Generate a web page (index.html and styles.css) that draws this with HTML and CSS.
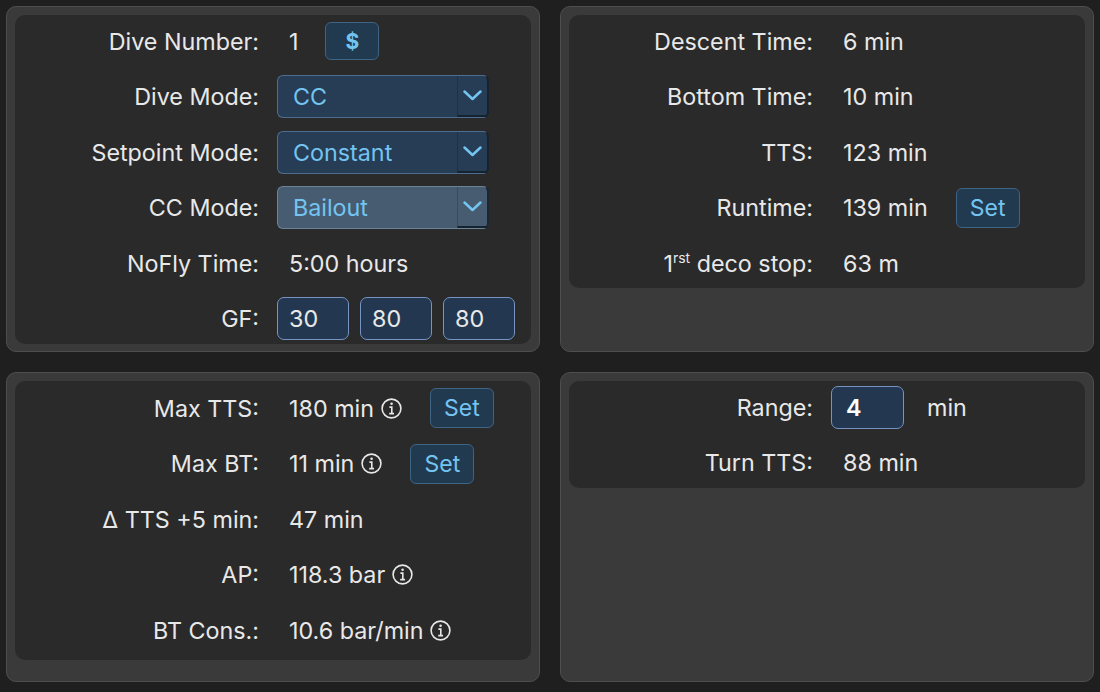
FILE: index.html
```html
<!DOCTYPE html>
<html lang="en">
<head>
    <meta charset="UTF-8">
    <title>Dive Planner</title>
    <link rel="stylesheet" href="styles.css">
</head>
<body>
    <div class="grid">
        <!-- dive settings -->
        <div class="panel">
            <div class="box">
                <div class="row">
                    <span class="label">Dive Number:</span>
                    <div class="value">
                        <span class="text">1</span>
                        <button class="btn btn-dollar">$</button>
                    </div>
                </div>
                <div class="row">
                    <span class="label">Dive Mode:</span>
                    <div class="value">
                        <div class="select"><span class="select-text">CC</span><span class="select-arrow"><svg width="19" height="11" viewBox="0 0 19 11"><path d="M1.5 1.5L9.5 9L17.5 1.5" fill="none" stroke="#74c4f0" stroke-width="2.5" stroke-linecap="round" stroke-linejoin="round"/></svg></span></div>
                    </div>
                </div>
                <div class="row">
                    <span class="label">Setpoint Mode:</span>
                    <div class="value">
                        <div class="select"><span class="select-text">Constant</span><span class="select-arrow"><svg width="19" height="11" viewBox="0 0 19 11"><path d="M1.5 1.5L9.5 9L17.5 1.5" fill="none" stroke="#74c4f0" stroke-width="2.5" stroke-linecap="round" stroke-linejoin="round"/></svg></span></div>
                    </div>
                </div>
                <div class="row">
                    <span class="label">CC Mode:</span>
                    <div class="value">
                        <div class="select select-active"><span class="select-text">Bailout</span><span class="select-arrow"><svg width="19" height="11" viewBox="0 0 19 11"><path d="M1.5 1.5L9.5 9L17.5 1.5" fill="none" stroke="#74c4f0" stroke-width="2.5" stroke-linecap="round" stroke-linejoin="round"/></svg></span></div>
                    </div>
                </div>
                <div class="row">
                    <span class="label">NoFly Time:</span>
                    <div class="value"><span class="text">5:00 hours</span></div>
                </div>
                <div class="row">
                    <span class="label">GF:</span>
                    <div class="value gf">
                        <input class="field" type="text" value="30">
                        <input class="field" type="text" value="80">
                        <input class="field" type="text" value="80">
                    </div>
                </div>
            </div>
        </div>

        <!-- times -->
        <div class="panel">
            <div class="box">
                <div class="row">
                    <span class="label">Descent Time:</span>
                    <div class="value"><span class="text">6 min</span></div>
                </div>
                <div class="row">
                    <span class="label">Bottom Time:</span>
                    <div class="value"><span class="text">10 min</span></div>
                </div>
                <div class="row">
                    <span class="label">TTS:</span>
                    <div class="value"><span class="text">123 min</span></div>
                </div>
                <div class="row">
                    <span class="label">Runtime:</span>
                    <div class="value">
                        <span class="text">139 min</span>
                        <button class="btn btn-set">Set</button>
                    </div>
                </div>
                <div class="row">
                    <span class="label">1<sup>rst</sup> deco stop:</span>
                    <div class="value"><span class="text">63 m</span></div>
                </div>
            </div>
        </div>

        <!-- limits -->
        <div class="panel">
            <div class="box box-loose">
                <div class="row">
                    <span class="label">Max TTS:</span>
                    <div class="value">
                        <span class="text">180 min</span>
                        <svg class="info" width="21" height="21" viewBox="0 0 21 21"><circle cx="10.5" cy="10.5" r="9.4" fill="none" stroke="#e8e8e8" stroke-width="1.6"/><circle cx="10.6" cy="5.8" r="1.3" fill="#e8e8e8"/><path d="M8.4 9.1H10.8V15.6M8.2 15.6H13" fill="none" stroke="#e8e8e8" stroke-width="1.6"/></svg>
                        <button class="btn btn-set">Set</button>
                    </div>
                </div>
                <div class="row">
                    <span class="label">Max BT:</span>
                    <div class="value">
                        <span class="text">11 min</span>
                        <svg class="info" width="21" height="21" viewBox="0 0 21 21"><circle cx="10.5" cy="10.5" r="9.4" fill="none" stroke="#e8e8e8" stroke-width="1.6"/><circle cx="10.6" cy="5.8" r="1.3" fill="#e8e8e8"/><path d="M8.4 9.1H10.8V15.6M8.2 15.6H13" fill="none" stroke="#e8e8e8" stroke-width="1.6"/></svg>
                        <button class="btn btn-set">Set</button>
                    </div>
                </div>
                <div class="row">
                    <span class="label">&Delta; TTS +5 min:</span>
                    <div class="value"><span class="text">47 min</span></div>
                </div>
                <div class="row">
                    <span class="label">AP:</span>
                    <div class="value">
                        <span class="text">118.3 bar</span>
                        <svg class="info" width="21" height="21" viewBox="0 0 21 21"><circle cx="10.5" cy="10.5" r="9.4" fill="none" stroke="#e8e8e8" stroke-width="1.6"/><circle cx="10.6" cy="5.8" r="1.3" fill="#e8e8e8"/><path d="M8.4 9.1H10.8V15.6M8.2 15.6H13" fill="none" stroke="#e8e8e8" stroke-width="1.6"/></svg>
                    </div>
                </div>
                <div class="row">
                    <span class="label">BT Cons.:</span>
                    <div class="value">
                        <span class="text">10.6 bar/min</span>
                        <svg class="info" width="21" height="21" viewBox="0 0 21 21"><circle cx="10.5" cy="10.5" r="9.4" fill="none" stroke="#e8e8e8" stroke-width="1.6"/><circle cx="10.6" cy="5.8" r="1.3" fill="#e8e8e8"/><path d="M8.4 9.1H10.8V15.6M8.2 15.6H13" fill="none" stroke="#e8e8e8" stroke-width="1.6"/></svg>
                    </div>
                </div>
            </div>
        </div>

        <!-- turn -->
        <div class="panel">
            <div class="box">
                <div class="row">
                    <span class="label">Range:</span>
                    <div class="value">
                        <input class="field field-range" type="text" value="4">
                        <span class="unit">min</span>
                    </div>
                </div>
                <div class="row">
                    <span class="label">Turn TTS:</span>
                    <div class="value"><span class="text">88 min</span></div>
                </div>
            </div>
        </div>
    </div>
</body>
</html>
```

FILE: styles.css
```css
body {
    margin: 0;
    background-color: #1f1f1f;
    font-family: Inter, "Liberation Sans", sans-serif;
    font-size: 23.3px;
    color: #e8e8e8;
}
.grid {
    display: grid;
    grid-template-columns: 534px 534px;
    grid-template-rows: 346px 310px;
    gap: 20px;
    padding: 6px;
}
.panel {
    background-color: #3a3a3a;
    border: 1px solid #4e4e4e;
    border-radius: 10px;
    padding: 8px;
}
.box {
    display: flex;
    flex-direction: column;
    gap: 11.5px;
    padding: 4px 0 3px;
    background-color: #2a2a2a;
    border-radius: 10px;
}
.box-loose {
    padding: 5px 0 8px;
}
.row {
    display: flex;
    align-items: center;
    height: 44px;
}
.label {
    flex-shrink: 0;
    width: 244px;
    text-align: right;
}
.label sup {
    font-size: 14px;
    vertical-align: 9px;
    line-height: 0;
}
.value {
    display: flex;
    align-items: center;
    margin-left: 18px;
}
.text {
    padding-left: 12px;
}
.info {
    margin-left: 7px;
}
.btn {
    font-family: inherit;
    color: #74c4f0;
    background-color: #213a50;
    border: 1px solid #3f6382;
    border-radius: 6px;
    cursor: pointer;
}
.btn-dollar {
    width: 54px;
    height: 38px;
    margin-left: 27px;
    font-size: 21px;
    font-weight: bold;
}
.btn-set {
    width: 64px;
    height: 40px;
    margin-left: 28px;
    font-size: 23px;
}
.select {
    display: flex;
    width: 212px;
    height: 43px;
    box-sizing: border-box;
    background-color: #263d55;
    border: 1px solid #4d6d8e;
    border-right: 2px solid #152230;
    border-radius: 6px;
    color: #74c4f0;
}
.select-active {
    background-color: #475c70;
    border-color: #6a8398;
    border-right-color: #1b2631;
}
.select-text {
    flex: 1;
    display: flex;
    align-items: center;
    padding-left: 15px;
}
.select-arrow {
    display: flex;
    align-items: center;
    justify-content: center;
    width: 29px;
    border-left: 1px solid rgba(0, 0, 0, 0.18);
    border-bottom: 2px solid #152230;
}
.gf {
    gap: 11px;
}
.field {
    width: 72px;
    height: 43px;
    box-sizing: border-box;
    padding: 0 0 0 11px;
    font-family: inherit;
    font-size: 23.3px;
    color: #e8e8e8;
    background-color: #233850;
    border: 1.5px solid #7693c2;
    border-radius: 7px;
    outline: none;
}
.field-range {
    width: 73px;
    padding-left: 14px;
    color: #ffffff;
    font-weight: 600;
}
.unit {
    margin-left: 23px;
}
```
